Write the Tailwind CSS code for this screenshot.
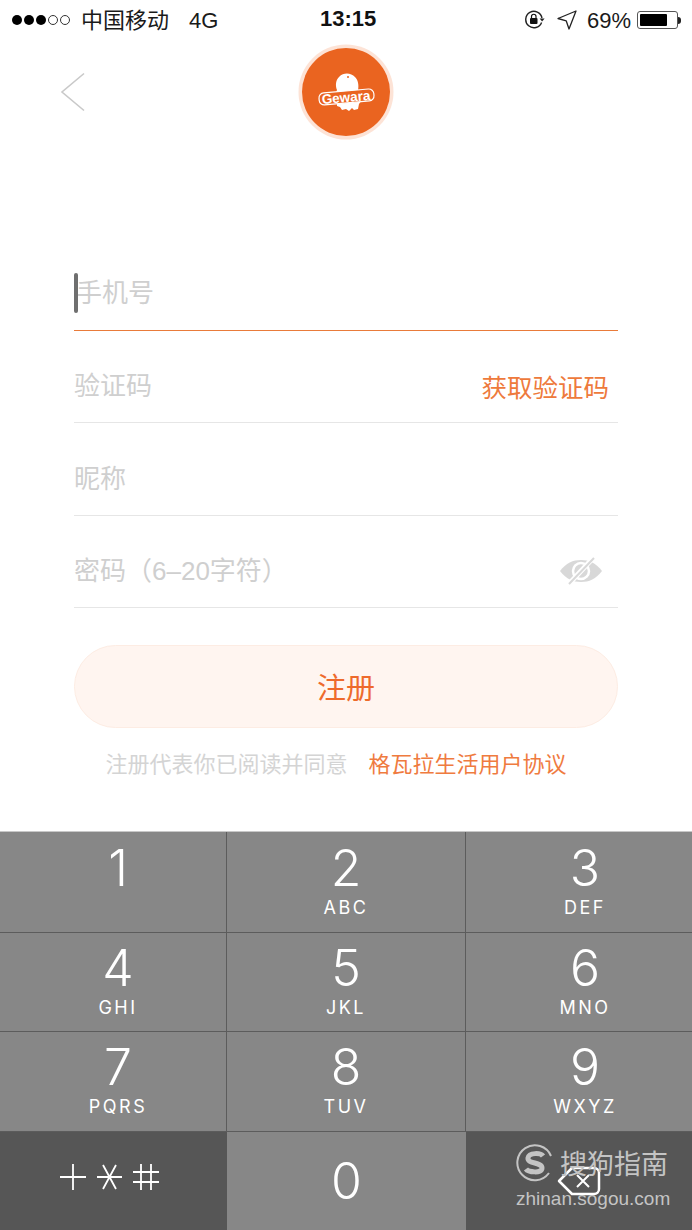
<!DOCTYPE html>
<html lang="en">

<head>
	<meta charset="UTF-8">
	<meta name="viewport" content="width=device-width, initial-scale=1.0">
	<title>Gewara Register</title>
	<script src="https://cdn.jsdelivr.net/npm/@tailwindcss/browser@4"></script>
</head>

<body class="bg-white w-[692px] h-[1230px] overflow-hidden font-['Liberation_Sans','Noto_Sans_CJK_SC',sans-serif]">
	<!-- status bar -->
	<div class="h-[40px] flex items-center justify-between pl-[12px] pr-[10px] text-[22px] text-[#1a1a1a] relative">
		<div class="flex items-center">
			<div class="flex gap-[2px] mr-[11px]">
				<span class="w-[10px] h-[10px] rounded-full bg-black"></span>
				<span class="w-[10px] h-[10px] rounded-full bg-black"></span>
				<span class="w-[10px] h-[10px] rounded-full bg-black"></span>
				<span class="w-[10px] h-[10px] rounded-full border border-[#333]"></span>
				<span class="w-[10px] h-[10px] rounded-full border border-[#333]"></span>
			</div>
			<span>中国移动</span>
			<span class="ml-[20px]">4G</span>
		</div>
		<div class="absolute left-[320px] top-[5px] font-semibold text-[22px] leading-[28px] text-[#111]">13:15</div>
		<div class="flex items-center">
			<svg width="22" height="20" viewBox="0 0 22 20" fill="none" class="mr-[11px]">
				<path d="M17.6 12.5A8.2 8.2 0 1 1 18 8" stroke="#222" stroke-width="1.4"/>
				<path d="M15.6 8.5h5l-2.5 3z" fill="#222"/>
				<rect x="6" y="8" width="7.500" height="6" rx="1" fill="#111"/>
				<path d="M7.500 8V6.500a2.200 2.200 0 0 1 4.500 0V8" stroke="#111" stroke-width="1.200"/>
			</svg>
			<svg width="20" height="20" viewBox="0 0 20 20" fill="none" class="mr-[10px]">
				<path d="M19 1 1 8.500l8.200 2.300L12 19z" stroke="#222" stroke-width="1.300" stroke-linejoin="round"/>
			</svg>
			<span class="mr-[6px]">69%</span>
			<div class="w-[41px] h-[18px] rounded-[3px] border border-[#555] p-[2px]">
				<div class="w-[27px] h-full bg-black rounded-[1px]"></div>
			</div>
			<div class="w-[3px] h-[7px] mr-[1px] bg-[#222] rounded-r-full"></div>
		</div>
	</div>

	<!-- header: back arrow and logo -->
	<div class="h-[104px] relative flex items-start justify-center pt-[4px]">
		<svg width="26" height="40" viewBox="0 0 26 40" fill="none" class="absolute left-[60px] top-[32px]">
			<path d="M24 1.500 2 20l22 18.500" stroke="#c9c9c9" stroke-width="1.600"/>
		</svg>
		<svg width="96" height="96" viewBox="0 0 96 96" class="mr-[1px]">
			<circle cx="48" cy="48" r="47.500" fill="#fde3d6"/>
			<circle cx="48" cy="48" r="44" fill="#ea6420"/>
			<path d="M39 46c-2-5-1-10 2-13 5-5 12-4 16 0 3 3 4 8 3 13l3 2 1 8-3 4-1 5-4 1-2-2-3 3-3-2-4 1-2-3-3-1v-5l-2-6z" fill="#fff"/>
			<circle cx="50" cy="33" r="1" fill="#ea6420"/>
			<rect x="21" y="47" width="55" height="12" rx="5" transform="rotate(-5 48 53)" fill="#ea6420" stroke="#fff" stroke-width="1.200"/>
			<text x="48" y="58" text-anchor="middle" transform="rotate(-5 48 53)" font-family="'Liberation Sans',sans-serif" font-size="13.500" font-weight="700" fill="#fff">Gewara</text>
		</svg>
	</div>

	<!-- form -->
	<form class="mx-[74px] mt-[95px]">
		<div class="relative h-[92px] border-b border-[#e97b3a] flex items-center pt-[18px]">
			<span class="absolute left-0 top-[34px] w-[4px] h-[40px] rounded-full bg-[#6f6f6f]"></span>
			<input type="tel" placeholder="手机号" class="w-full pl-[2px] text-[26px] outline-none placeholder:text-[#cfcfcf]">
		</div>
		<div class="h-[92px] border-b border-[#e6e6e6] flex items-center justify-between pr-[9px] pt-[20px]">
			<input type="tel" placeholder="验证码" class="w-[200px] text-[26px] outline-none placeholder:text-[#cfcfcf]">
			<span class="text-[25.500px] mt-[3px] text-[#ee7a3c]">获取验证码</span>
		</div>
		<div class="h-[93px] border-b border-[#e6e6e6] flex items-center pt-[20px]">
			<input type="text" placeholder="昵称" class="w-full text-[26px] outline-none placeholder:text-[#cfcfcf]">
		</div>
		<div class="h-[92px] border-b border-[#e6e6e6] flex items-center justify-between pr-[15px] pt-[20px]">
			<input type="password" placeholder="密码（6–20字符）" class="w-[300px] text-[26px] outline-none placeholder:text-[#cfcfcf]">
			<svg width="44" height="28" viewBox="0 0 44 28" fill="none" class="mb-[2px]">
				<path d="M1 14C7 6 14 3 22 3s15 3 21 11c-6 8-13 11-21 11S7 22 1 14z" fill="#d8d8d8"/>
				<circle cx="22" cy="14" r="8" fill="none" stroke="#fff" stroke-width="2.500"/>
				<path d="M35 0 9 28" stroke="#fff" stroke-width="5"/>
				<path d="M35 1 10 27" stroke="#d8d8d8" stroke-width="2"/>
			</svg>
		</div>
		<button type="button" class="w-full h-[83px] mt-[37px] pt-[6px] rounded-full bg-[#fff5f0] border border-[#fdece3] text-[29px] text-[#ee6a2c]">注册</button>
		<p class="mt-[22px] text-[22px] leading-[30px] text-center whitespace-nowrap text-[#d4d4d4] pr-[20px]">注册代表你已阅读并同意<a class="ml-[21px] text-[#ef7b3f]">格瓦拉生活用户协议</a></p>
	</form>

	<!-- numeric keyboard -->
	<div class="absolute left-0 top-[831px] w-[692px] h-[399px] border-t border-[#c8c8c8] bg-[#878787] text-white font-['Inter','Liberation_Sans',sans-serif]">
		<div class="grid grid-cols-[227px_239px_226px] grid-rows-[101px_99px_100px_98px]">
			<div class="border-r border-b border-[#5c5c5c] flex flex-col items-center pt-[9px] pl-[10px]"><span class="text-[50px] leading-[54px] font-light">1</span></div>
			<div class="border-r border-b border-[#5c5c5c] flex flex-col items-center pt-[9px]"><span class="text-[50px] leading-[54px] font-light">2</span><span class="text-[18px] leading-[20px] mt-[3px] tracking-[2.500px]">ABC</span></div>
			<div class="border-b border-[#5c5c5c] flex flex-col items-center pt-[9px] pl-[12px]"><span class="text-[50px] leading-[54px] font-light">3</span><span class="text-[18px] leading-[20px] mt-[3px] tracking-[2.500px]">DEF</span></div>

			<div class="border-r border-b border-[#5c5c5c] flex flex-col items-center pt-[8px] pl-[10px]"><span class="text-[50px] leading-[54px] font-light">4</span><span class="text-[18px] leading-[20px] mt-[3px] tracking-[2.500px]">GHI</span></div>
			<div class="border-r border-b border-[#5c5c5c] flex flex-col items-center pt-[8px]"><span class="text-[50px] leading-[54px] font-light">5</span><span class="text-[18px] leading-[20px] mt-[3px] tracking-[2.500px]">JKL</span></div>
			<div class="border-b border-[#5c5c5c] flex flex-col items-center pt-[8px] pl-[12px]"><span class="text-[50px] leading-[54px] font-light">6</span><span class="text-[18px] leading-[20px] mt-[3px] tracking-[2.500px]">MNO</span></div>

			<div class="border-r border-b border-[#5c5c5c] flex flex-col items-center pt-[8px] pl-[10px]"><span class="text-[50px] leading-[54px] font-light">7</span><span class="text-[18px] leading-[20px] mt-[3px] tracking-[2.500px]">PQRS</span></div>
			<div class="border-r border-b border-[#5c5c5c] flex flex-col items-center pt-[8px]"><span class="text-[50px] leading-[54px] font-light">8</span><span class="text-[18px] leading-[20px] mt-[3px] tracking-[2.500px]">TUV</span></div>
			<div class="border-b border-[#5c5c5c] flex flex-col items-center pt-[8px] pl-[12px]"><span class="text-[50px] leading-[54px] font-light">9</span><span class="text-[18px] leading-[20px] mt-[3px] tracking-[2.500px]">WXYZ</span></div>

			<div class="bg-[#565656] flex items-center justify-center pb-[8px] pr-[7px]">
				<svg width="100" height="30" viewBox="0 0 100 30" fill="none" stroke="#fff" stroke-width="1.800">
					<path d="M0 15h26M13 2v26"/>
					<path d="M37 15h25M43 3l13 24M56 3 43 27"/>
					<path d="M73 10h26M73 20h26M81 2v26M91 2v26"/>
				</svg>
			</div>
			<div class="flex items-center justify-center"><span class="text-[50px] leading-[54px] font-light">0</span></div>
			<div class="bg-[#565656] relative flex items-center justify-center">
				<svg width="44" height="30" viewBox="0 0 44 30" fill="none" stroke="#fff">
					<path d="M15 2h22a5 5 0 0 1 5 5v16a5 5 0 0 1-5 5H15L2 15z" stroke-width="2.500" stroke-linejoin="round"/>
					<path d="M20 9l12 12M32 9 20 21" stroke-width="2"/>
				</svg>
			</div>
		</div>
	</div>

	<!-- watermark -->
	<div class="absolute left-[516px] top-[1142px] w-[155px] text-[#c4c4c4] font-['Liberation_Sans','Noto_Sans_CJK_SC',sans-serif]">
		<div class="flex items-center">
			<svg width="38" height="38" viewBox="0 0 38 38" fill="none" class="shrink-0">
				<path d="M33 29A17.500 17.500 0 1 1 35 12" stroke="#c4c4c4" stroke-width="2"/>
				<path d="M27 12c-2-3-14-4-15 2s14 4 14 10-14 4-16 1" stroke="#c4c4c4" stroke-width="5"/>
			</svg>
			<span class="ml-[6px] mt-[4px] text-[27px] leading-[38px] whitespace-nowrap">搜狗指南</span>
		</div>
		<div class="text-[19px] leading-[22px] mt-[4px] whitespace-nowrap">zhinan.sogou.com</div>
	</div>
</body>

</html>
